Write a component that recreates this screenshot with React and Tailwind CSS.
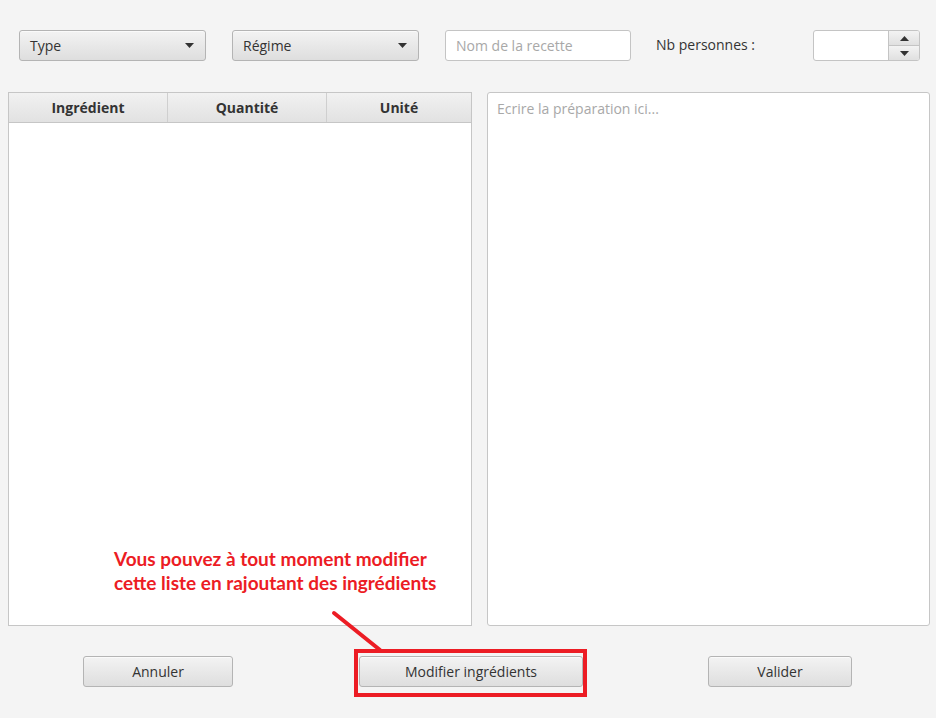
import React from "react";

const ui = { fontFamily: '"Open Sans", "Noto Sans", sans-serif' };

function Caret({ up = false }) {
  return (
    <svg width="9" height="5" viewBox="0 0 9 5" className="block">
      {up ? <path d="M0 5 L4.5 0 L9 5 Z" fill="#333" /> : <path d="M0 0 L9 0 L4.5 5 Z" fill="#333" />}
    </svg>
  );
}

function Combo({ label, className }) {
  return (
    <div
      className={`h-[31px] flex items-center justify-between pl-[10px] pr-[11px] rounded-[3px] border border-[#b4b4b4] bg-gradient-to-b from-[#f3f3f3] to-[#dedede] shadow-[inset_0_1px_0_#fafafa] text-[14px] text-[#333] ${className}`}
    >
      <span>{label}</span>
      <Caret />
    </div>
  );
}

function Btn({ label, className }) {
  return (
    <div
      className={`h-[31px] flex items-center justify-center rounded-[3px] border border-[#b4b4b4] bg-gradient-to-b from-[#f3f3f3] to-[#dedede] shadow-[inset_0_1px_0_#fafafa] text-[14px] text-[#333] ${className}`}
    >
      {label}
    </div>
  );
}

export default function App() {
  return (
    <div className="relative w-[936px] h-[718px] bg-[#f4f4f4] overflow-hidden" style={ui}>
      {/* top row */}
      <div className="flex items-center pl-[19px] pt-[30px]">
        <Combo label="Type" className="w-[187px]" />
        <Combo label="Régime" className="w-[187px] ml-[26px]" />
        <div className="w-[186px] h-[31px] ml-[26px] flex items-center pl-[10px] rounded-[3px] border border-[#c4c4c4] bg-white text-[14px] text-[#a8a8a8]">
          Nom de la recette
        </div>
        <div className="w-[157px] ml-[25px] text-[14px] text-[#333] pb-[2px]">Nb personnes :</div>
        <div className="w-[107px] h-[31px] flex rounded-[3px] border border-[#c4c4c4] bg-white overflow-hidden">
          <div className="flex-1" />
          <div className="w-[31px] flex flex-col border-l border-[#c4c4c4]">
            <div className="flex-1 flex items-center justify-center bg-gradient-to-b from-[#f3f3f3] to-[#e0e0e0] border-b border-[#c4c4c4]">
              <Caret up />
            </div>
            <div className="flex-1 flex items-center justify-center bg-gradient-to-b from-[#f3f3f3] to-[#e0e0e0]">
              <Caret />
            </div>
          </div>
        </div>
      </div>

      {/* main panels */}
      <div className="flex mt-[31px] pl-[8px]">
        <div className="w-[464px] h-[534px] border border-[#c6c6c6] bg-white flex flex-col">
          <div className="h-[30px] flex border-b border-[#c6c6c6] bg-gradient-to-b from-[#f1f1f1] to-[#e2e2e2] text-[14px] font-bold text-[#333]">
            <div className="w-[159px] flex items-center justify-center border-r border-[#cfcfcf]">Ingrédient</div>
            <div className="w-[159px] flex items-center justify-center border-r border-[#cfcfcf]">Quantité</div>
            <div className="flex-1 flex items-center justify-center">Unité</div>
          </div>
          <div className="flex-1" />
        </div>
        <div className="w-[443px] h-[534px] ml-[15px] border border-[#c6c6c6] bg-white rounded-[3px] px-[9px] pt-[5px] text-[14px] text-[#a8a8a8]">
          Ecrire la préparation ici...
        </div>
      </div>

      {/* bottom buttons */}
      <div className="flex mt-[30px]">
        <Btn label="Annuler" className="w-[150px] ml-[83px]" />
        <Btn label="Modifier ingrédients" className="w-[224px] ml-[126px]" />
        <Btn label="Valider" className="w-[144px] ml-[125px]" />
      </div>

      {/* annotation overlay */}
      <div
        className="absolute left-[114px] top-[547px] text-[19px] font-bold leading-[24px] text-[#ec1c24]"
        style={{ fontFamily: '"Lato", "Open Sans", sans-serif' }}
      >
        <div>Vous pouvez à tout moment modifier</div>
        <div>cette liste en rajoutant des ingrédients</div>
      </div>
      <svg className="absolute left-0 top-0 pointer-events-none" width="936" height="718">
        <line x1="334" y1="613" x2="380" y2="650" stroke="#ec1c24" strokeWidth="4" strokeLinecap="round" />
      </svg>
      <div className="absolute left-[354px] top-[649px] w-[233px] h-[48px] border-[4.5px] border-[#ec1c24]" />
    </div>
  );
}
